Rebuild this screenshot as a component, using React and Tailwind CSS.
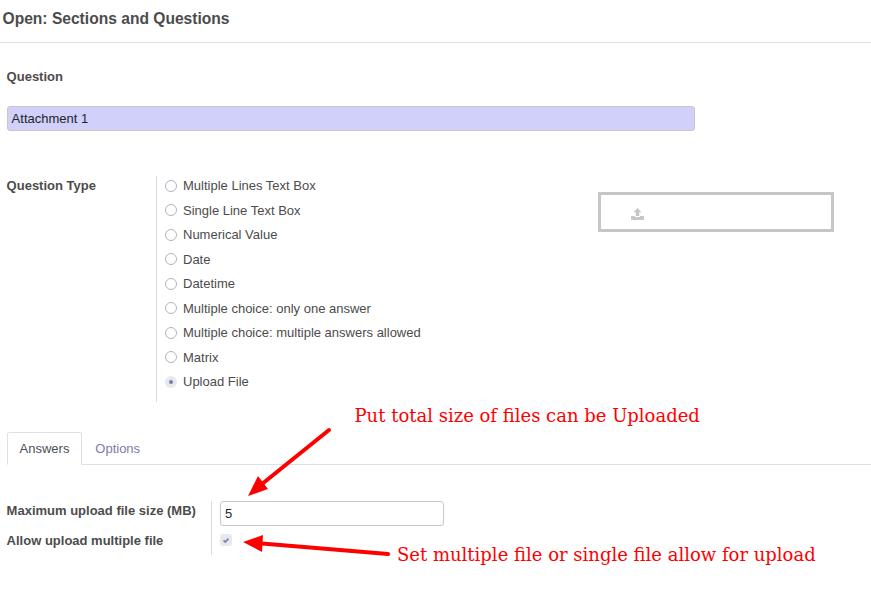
const questionTypes = [
  "Multiple Lines Text Box",
  "Single Line Text Box",
  "Numerical Value",
  "Date",
  "Datetime",
  "Multiple choice: only one answer",
  "Multiple choice: multiple answers allowed",
  "Matrix",
  "Upload File",
];

function Radio({ label, checked }) {
  return (
    <label className="flex h-[24.5px] items-start gap-1.5">
      <span
        className={
          checked
            ? "mt-1 flex size-3 shrink-0 items-center justify-center rounded-full bg-[#e6e9ed]"
            : "mt-[3.9px] size-3 shrink-0 rounded-full border border-[#adb5bd] bg-white"
        }
      >
        {checked && <span className="size-1 rounded-full bg-[#7c7bad]" />}
      </span>
      <span className="leading-[20px] whitespace-nowrap">{label}</span>
    </label>
  );
}

function UploadIcon() {
  return (
    <svg width="13" height="13" viewBox="0 0 13 13" fill="#c6c6c6" aria-hidden="true">
      <path d="M6.500 0 10.500 4.300H8.200V8H4.800V4.300H2.500Z" />
      <path d="M0.500 8H4V8.500Q4 9 4.500 9H8.500Q9 9 9 8.500V8H12.500Q13 8 13 8.500V11.500Q13 12 12.500 12H.5Q0 12 0 11.500V8.500Q0 8 .5 8Z" />
    </svg>
  );
}

export default function App() {
  return (
    <div className="relative h-[592px] w-[871px] overflow-hidden bg-white font-['Liberation_Sans',Arial,sans-serif] text-[13px] text-[#4c4c4c]">
      <header className="h-[43px] border-b border-[#dee2e6] pt-[7px] pl-[2.500px]">
        <h1 className="text-[15.6px] leading-6 font-bold">Open: Sections and Questions</h1>
      </header>

      <main className="pl-[7px]">
        <section className="pt-6">
          <h2 className="-ml-[0.4px] leading-5 font-bold">Question</h2>
          <div className="mt-[19px] h-[25px] w-[688px] rounded-[3px] border border-[#c8c8c8] bg-[#d0d0fa] px-[3.600px] leading-[23px] text-[#212529]">
            Attachment 1
          </div>
        </section>

        <section className="mt-[45px] flex h-[226px]">
          <h2 className="-ml-[0.4px] w-[149.4px] leading-5 font-bold">Question Type</h2>
          <div className="w-[434px] border-l border-[#dbdde0] pl-2">
            {questionTypes.map((t) => (
              <Radio key={t} label={t} checked={t === "Upload File"} />
            ))}
          </div>
          <div className="mt-4 ml-2 flex h-10 w-[236px] border-[3px] border-[#c6c6c6] pt-[13px] pl-[30px]">
            <UploadIcon />
          </div>
        </section>

        <nav className="mt-[30px] flex h-[33px] border-b border-[#dee2e6]">
          <div className="h-[33px] w-[75px] rounded-t-[3px] border border-b-white border-[#dee2e6] text-center leading-[31px] text-[#495057]">
            Answers
          </div>
          <div className="pl-[13.300px] leading-[33px] text-[#7c7bad]">Options</div>
        </nav>

        <section className="mt-9 flex h-[54px]">
          <div className="-ml-[0.4px] w-[204.4px] font-bold">
            <div className="h-[30px] leading-5">Maximum upload file size (MB)</div>
            <div className="leading-5">Allow upload multiple file</div>
          </div>
          <div className="border-l border-[#dbdde0] pl-2">
            <div className="h-[25px] w-[224px] rounded-[3px] border border-[#c8c8c8] px-1 leading-[23px] text-[#212529]">
              5
            </div>
            <div className="mt-2 flex size-3 items-center justify-center rounded-[3px] bg-[#e6e9ed]">
              <svg width="6" height="5" viewBox="0 0 6 5" fill="none" stroke="#7c7bad" strokeWidth="1.700">
                <path d="M.5 2.400 2.200 4 5.500.7" />
              </svg>
            </div>
          </div>
        </section>
      </main>

      <svg className="absolute inset-0" width="871" height="592" fill="#f00" stroke="#f00">
        <path d="M329 430 262 484" strokeWidth="4" strokeLinecap="round" />
        <path d="M248 496 258 476 268 489Z" stroke="none" />
        <path d="M388 554 262 543.500" strokeWidth="4" strokeLinecap="round" />
        <path d="M243 542 263 535 262 552Z" stroke="none" />
      </svg>
      <p className="absolute top-[404px] left-[354.500px] font-['DejaVu_Serif',serif] text-[18px] leading-6 whitespace-nowrap text-[#f00]">
        Put total size of files can be Uploaded
      </p>
      <p className="absolute top-[543px] left-[397px] font-['DejaVu_Serif',serif] text-[18px] leading-6 whitespace-nowrap text-[#f00]">
        Set multiple file or single file allow for upload
      </p>
    </div>
  );
}
